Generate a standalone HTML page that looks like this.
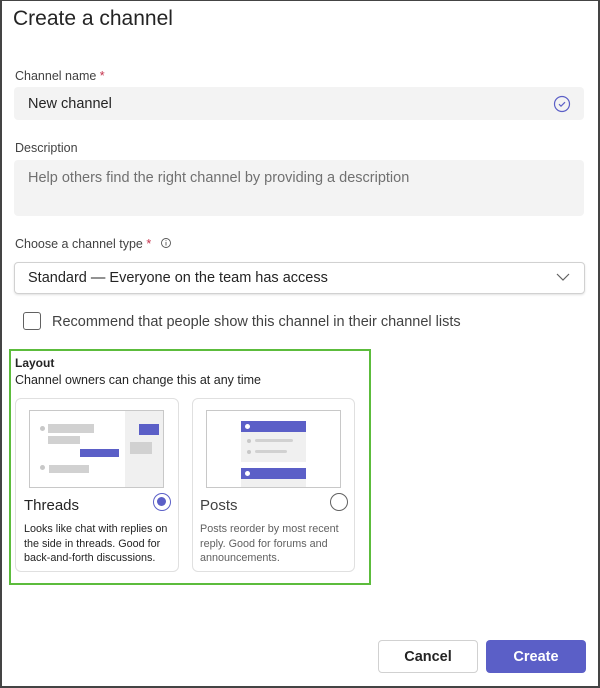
<!DOCTYPE html>
<html><head><style>
*{margin:0;padding:0;box-sizing:border-box}
body{width:600px;height:688px;position:relative;background:#fff;font-family:"Liberation Sans",sans-serif;color:#242424;overflow:hidden}
.a{position:absolute}
.frame{left:0;top:0;width:600px;height:688px;border:2px solid #444;border-top-width:1px}
.lbl{font-size:12.5px;color:#424242}
.inp{background:#f3f3f3;border-radius:4px}
.star{color:#c4314b}
.card{border:1px solid #e0e0e0;border-radius:6px;background:#fff}
.g{background:#d1d1d1;position:absolute}
.p{background:#5b5fc7;position:absolute}
.d{position:absolute;width:5px;height:5px;border-radius:50%;background:#c8c8c8}
.desc{font-size:10.8px;line-height:14.5px}
</style></head><body>
<div class="a frame"></div>
<div class="a" style="left:13px;top:7px;font-size:21px">Create a channel</div>
<div class="a lbl" style="left:15px;top:69px">Channel name <span class="star">*</span></div>
<div class="a inp" style="left:14px;top:87px;width:570px;height:33px"></div>
<div class="a" style="left:28px;top:96px;font-size:14.5px">New channel</div>
<svg class="a" style="left:553px;top:95px" width="18" height="18" viewBox="0 0 18 18"><circle cx="9" cy="9" r="7.5" fill="none" stroke="#5b5fc7" stroke-width="1.2"/><path d="M6 9.2l2 2 4-4" fill="none" stroke="#5b5fc7" stroke-width="1.2"/></svg>
<div class="a lbl" style="left:15px;top:141px">Description</div>
<div class="a inp" style="left:14px;top:160px;width:570px;height:56px"></div>
<div class="a" style="left:28px;top:170px;font-size:14.5px;color:#707070">Help others find the right channel by providing a description</div>
<div class="a lbl" style="left:15px;top:237px">Choose a channel type <span class="star">*</span></div>
<svg class="a" style="left:160px;top:237px" width="12" height="12" viewBox="0 0 12 12"><circle cx="6" cy="6" r="4.5" fill="none" stroke="#555" stroke-width="0.9"/><path d="M6 5v3.5M6 3.3v.8" stroke="#555" stroke-width="0.9"/></svg>
<div class="a" style="left:14px;top:262px;width:571px;height:32px;border:1px solid #d1d1d1;border-radius:4px;box-shadow:0 1px 2px rgba(0,0,0,.12)"></div>
<div class="a" style="left:28px;top:270px;font-size:14.5px">Standard — Everyone on the team has access</div>
<svg class="a" style="left:555px;top:271px" width="16" height="12" viewBox="0 0 16 12"><path d="M2 3l6 6 6-6" fill="none" stroke="#616161" stroke-width="1.2"/></svg>
<div class="a" style="left:23px;top:312px;width:18px;height:18px;border:1px solid #616161;border-radius:3px"></div>
<div class="a" style="left:52px;top:314px;font-size:14.5px;color:#424242">Recommend that people show this channel in their channel lists</div>
<div class="a" style="left:9px;top:349px;width:362px;height:236px;border:2.5px solid #5cbc3c"></div>
<div class="a" style="left:15px;top:356px;font-size:12px;font-weight:bold">Layout</div>
<div class="a" style="left:15px;top:373px;font-size:12.5px">Channel owners can change this at any time</div>

<div class="a card" style="left:15px;top:398px;width:164px;height:174px"></div>
<div class="a" style="left:29px;top:410px;width:135px;height:78px;border:1.5px solid #c8c8c8;background:#fff;overflow:hidden">
 <div style="position:absolute;left:95px;top:0;width:40px;height:78px;background:#f0f0f0"></div>
 <div class="d" style="left:10px;top:15px"></div><div class="g" style="left:18px;top:13px;width:46px;height:9px"></div>
 <div class="g" style="left:18px;top:25px;width:32px;height:8px"></div>
 <div class="p" style="left:50px;top:38px;width:39px;height:8px"></div>
 <div class="d" style="left:10px;top:54px"></div><div class="g" style="left:19px;top:54px;width:40px;height:8px"></div>
 <div class="p" style="left:109px;top:13px;width:20px;height:11px"></div>
 <div class="g" style="left:100px;top:31px;width:22px;height:12px"></div>
</div>
<div class="a" style="left:24px;top:497px;font-size:15px">Threads</div>
<div class="a" style="left:153px;top:493px;width:18px;height:18px;border-radius:50%;border:1.5px solid #5b5fc7"><div style="position:absolute;left:3px;top:3px;width:9px;height:9px;border-radius:50%;background:#5b5fc7"></div></div>
<div class="a desc" style="left:24px;top:522px">Looks like chat with replies on<br>the side in threads. Good for<br>back-and-forth discussions.</div>

<div class="a card" style="left:192px;top:398px;width:163px;height:174px"></div>
<div class="a" style="left:206px;top:410px;width:135px;height:78px;border:1.5px solid #c8c8c8;background:#fff;overflow:hidden">
 <div style="position:absolute;left:34px;top:10px;width:65px;height:41px;background:#f0f0f0"></div>
 <div class="p" style="left:34px;top:10px;width:65px;height:11px"></div>
 <div style="position:absolute;left:38px;top:13px;width:5px;height:5px;border-radius:50%;background:#fff"></div>
 <div class="d" style="left:40px;top:28px;width:4px;height:4px"></div><div class="g" style="left:48px;top:28px;width:38px;height:3px;border-radius:2px"></div>
 <div class="d" style="left:40px;top:39px;width:4px;height:4px"></div><div class="g" style="left:48px;top:39px;width:32px;height:3px;border-radius:2px"></div>
 <div style="position:absolute;left:34px;top:57px;width:65px;height:30px;background:#f0f0f0"></div>
 <div class="p" style="left:34px;top:57px;width:65px;height:11px"></div>
 <div style="position:absolute;left:38px;top:60px;width:5px;height:5px;border-radius:50%;background:#fff"></div>
</div>
<div class="a" style="left:200px;top:497px;font-size:15px;color:#424242">Posts</div>
<div class="a" style="left:330px;top:493px;width:18px;height:18px;border-radius:50%;border:1.2px solid #616161"></div>
<div class="a desc" style="left:200px;top:522px;color:#616161">Posts reorder by most recent<br>reply. Good for forums and<br>announcements.</div>

<div class="a" style="left:378px;top:640px;width:100px;height:33px;border:1px solid #d1d1d1;border-radius:4px;font-size:14.5px;font-weight:bold;text-align:center;line-height:33px">Cancel</div>
<div class="a" style="left:486px;top:640px;width:100px;height:33px;background:#5b5fc7;border-radius:4px;font-size:14.5px;font-weight:bold;color:#fff;text-align:center;line-height:35px">Create</div>
</body></html>
